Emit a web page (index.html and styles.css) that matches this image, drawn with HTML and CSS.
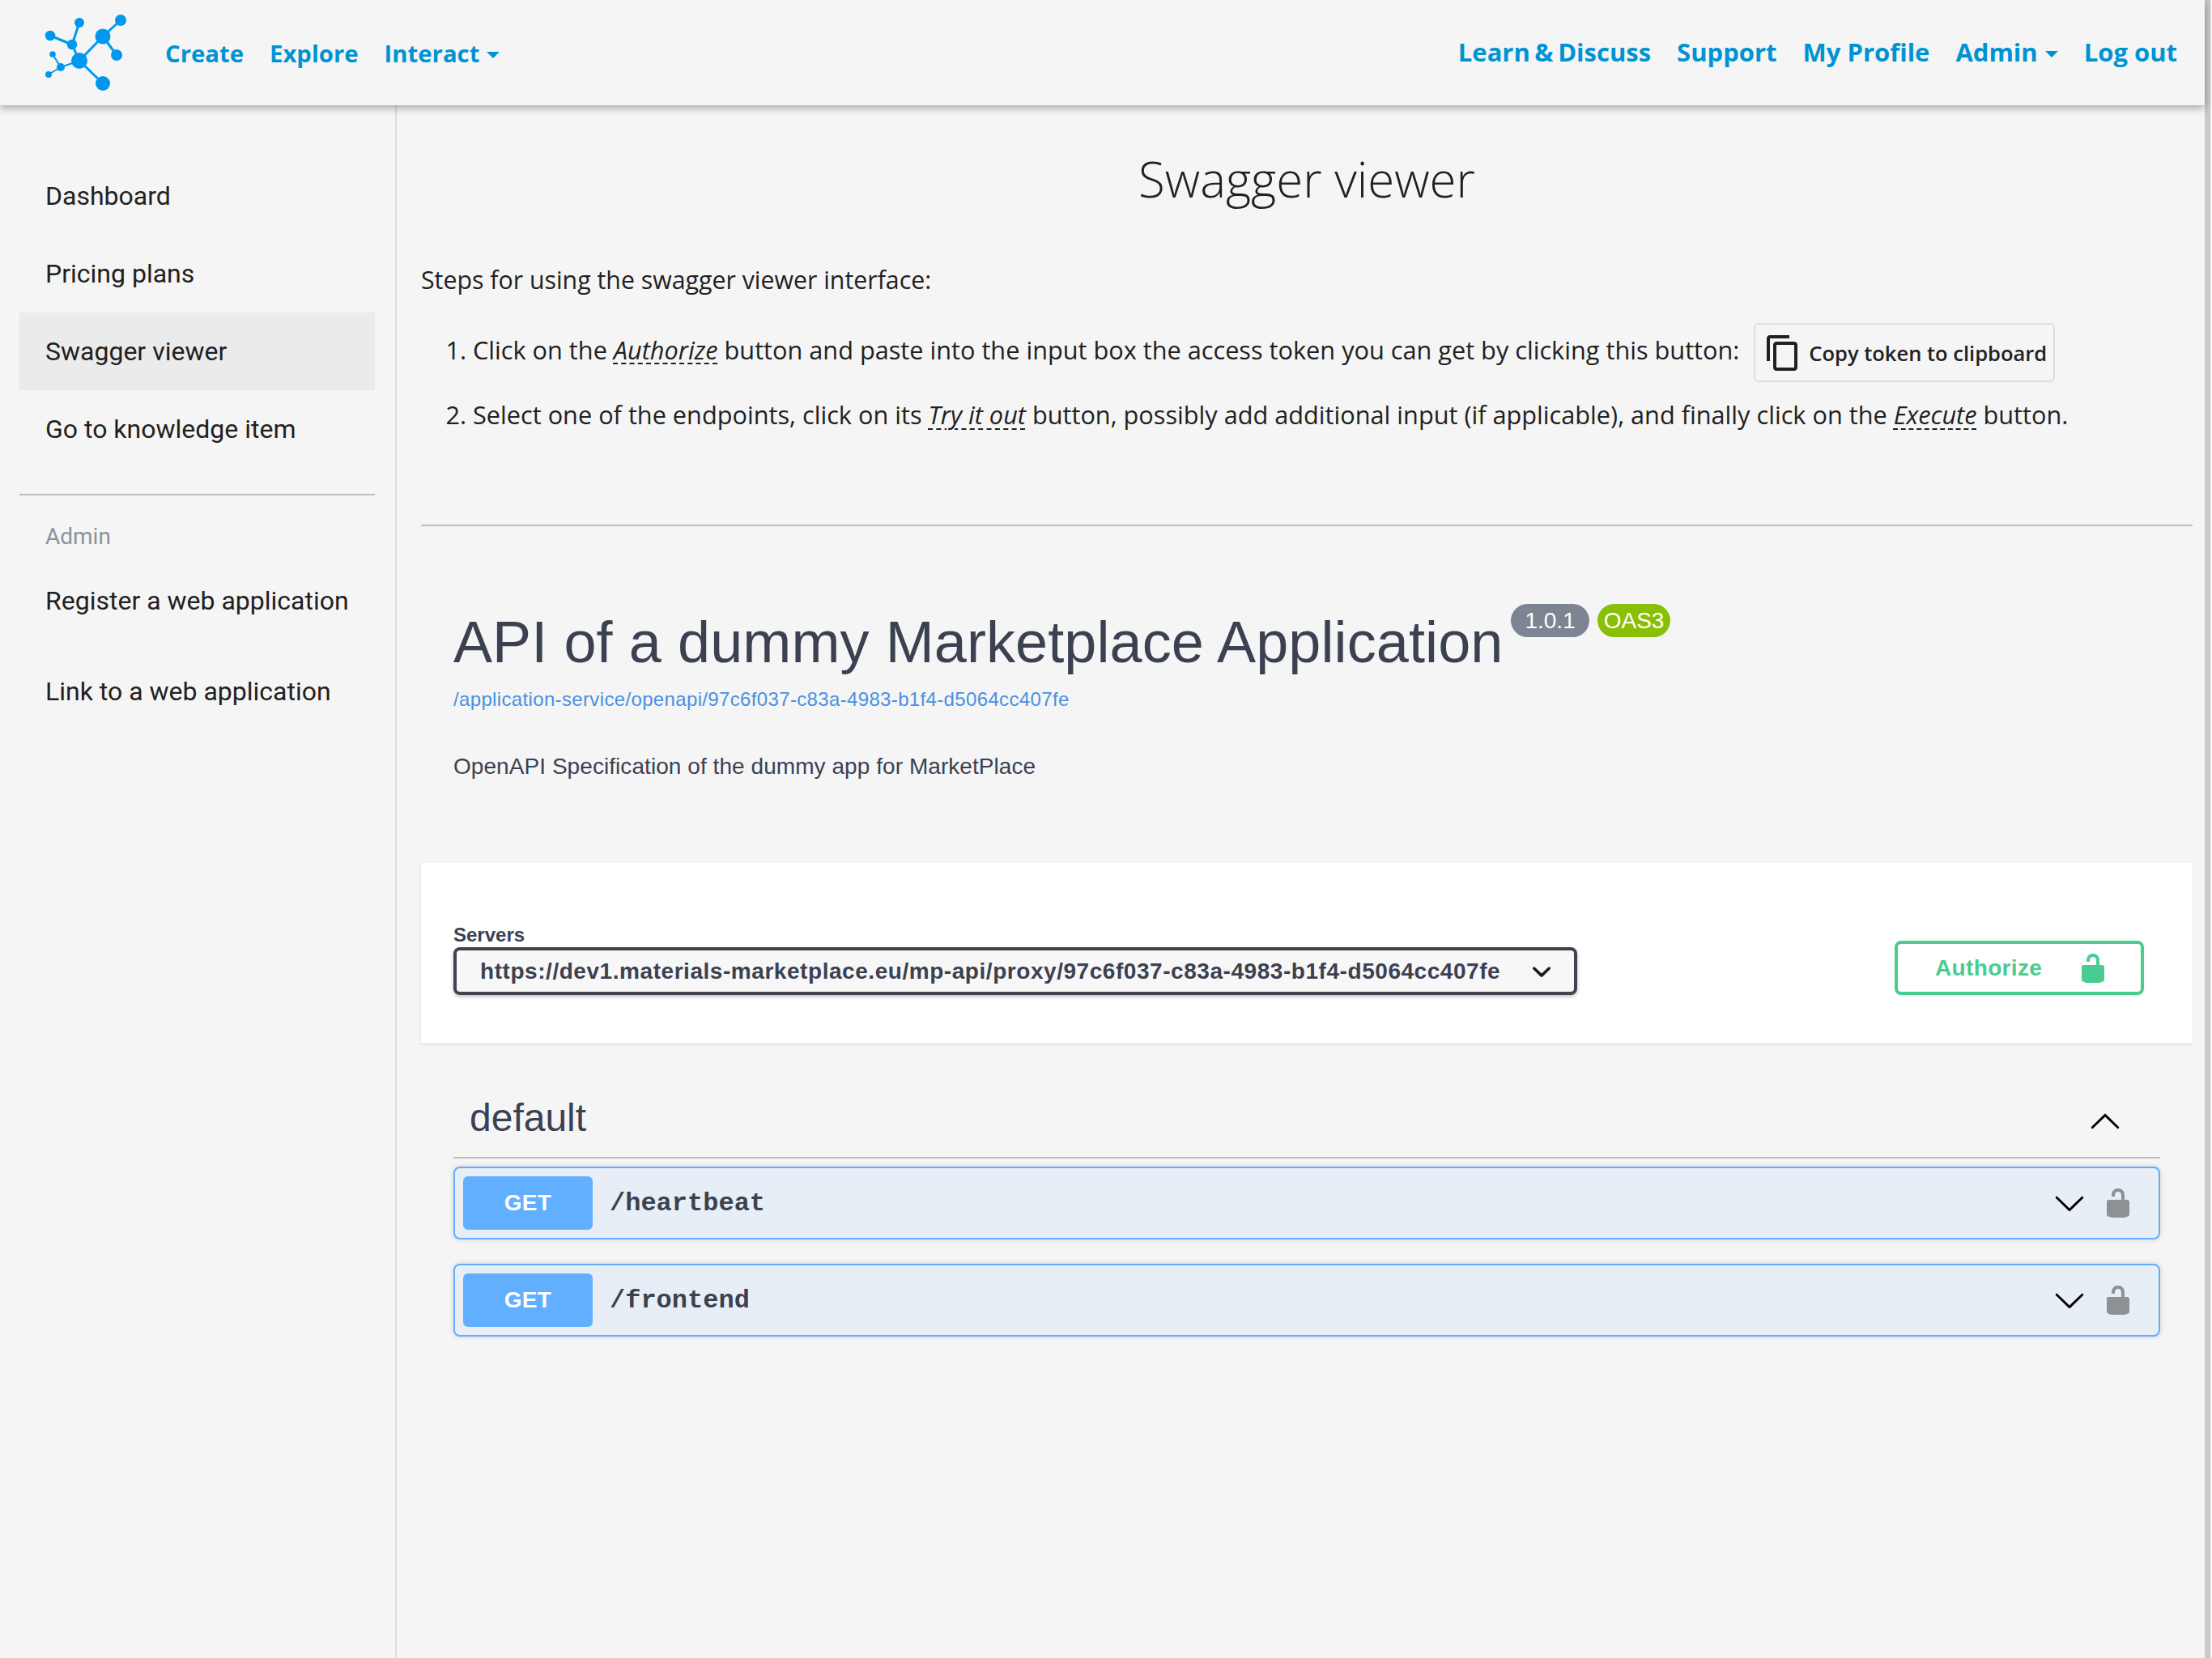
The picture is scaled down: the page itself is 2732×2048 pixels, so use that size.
FILE: index.html
```html
<!DOCTYPE html>
<html lang="en">
<head>
    <meta charset="UTF-8">
    <meta name="viewport" content="width=device-width, initial-scale=1.0">
    <title>Swagger viewer</title>
    <link rel="stylesheet" href="styles.css">
</head>
<body>
    <svg class="icon-defs" width="0" height="0" aria-hidden="true">
        <symbol id="lock-open" viewBox="0 0 20 20">
            <path d="M15.8 8H14V5.6C14 2.703 12.665 1 10 1 7.334 1 6 2.703 6 5.6V6h2v-.801C8 3.754 8.797 3 10 3c1.203 0 2 .754 2 2.199V8H4c-.553 0-1 .646-1 1.199V17c0 .549.428 1.139.951 1.307l1.197.387C5.672 18.861 6.55 19 7.1 19h5.8c.549 0 1.428-.139 1.951-.307l1.196-.387c.524-.167.953-.757.953-1.306V9.199C17 8.646 16.352 8 15.8 8z"/>
        </symbol>
        <symbol id="large-arrow" viewBox="0 0 20 20">
            <path d="M17.418 6.109c.272-.268.709-.268.979 0s.271.701 0 .969l-7.908 7.83c-.27.268-.707.268-.979 0l-7.908-7.83c-.27-.268-.27-.701 0-.969.271-.268.709-.268.979 0L10 13.25l7.418-7.141z"/>
        </symbol>
    </svg>

    <div class="page">
        <header class="topbar">
            <svg class="logo" viewBox="0 0 110 110" aria-label="Logo">
                <g stroke="#0098ef" stroke-width="3">
                    <line x1="99" y1="20" x2="77" y2="40"/>
                    <line x1="77" y1="40" x2="48" y2="70"/>
                    <line x1="77" y1="40" x2="94" y2="63"/>
                    <line x1="48" y1="70" x2="77" y2="98"/>
                    <line x1="48" y1="70" x2="39" y2="50"/>
                    <line x1="39" y1="50" x2="48" y2="23"/>
                    <line x1="39" y1="50" x2="12" y2="39"/>
                    <line x1="48" y1="70" x2="25" y2="78" stroke-width="2"/>
                    <line x1="25" y1="78" x2="15" y2="62" stroke-width="2"/>
                    <line x1="25" y1="78" x2="10" y2="87" stroke-width="2"/>
                </g>
                <g fill="#0098ef">
                    <circle cx="99" cy="20" r="7"/>
                    <circle cx="77" cy="40" r="9.5"/>
                    <circle cx="94" cy="63" r="7"/>
                    <circle cx="77" cy="98" r="9"/>
                    <circle cx="48" cy="70" r="10"/>
                    <circle cx="39" cy="50" r="6.3"/>
                    <circle cx="48" cy="23" r="6"/>
                    <circle cx="12" cy="39" r="6.3"/>
                    <circle cx="15" cy="62" r="3.8"/>
                    <circle cx="25" cy="78" r="5"/>
                    <circle cx="10" cy="87" r="4"/>
                </g>
            </svg>
            <nav class="nav nav-left">
                <a href="#">Create</a>
                <a href="#">Explore</a>
                <a href="#" class="caret">Interact</a>
            </nav>
            <nav class="nav nav-right">
                <a href="#" class="nav-learn">Learn &amp; Discuss</a>
                <a href="#">Support</a>
                <a href="#">My Profile</a>
                <a href="#" class="caret">Admin</a>
                <a href="#">Log out</a>
            </nav>
        </header>

        <div class="layout">
            <aside class="sidebar">
                <a href="#" class="side-link">Dashboard</a>
                <a href="#" class="side-link">Pricing plans</a>
                <a href="#" class="side-link active">Swagger viewer</a>
                <a href="#" class="side-link">Go to knowledge item</a>
                <hr class="side-divider">
                <div class="side-heading">Admin</div>
                <a href="#" class="side-link spaced">Register a web application</a>
                <a href="#" class="side-link spaced">Link to a web application</a>
            </aside>

            <main class="content">
                <h1 class="page-title">Swagger viewer</h1>
                <p class="intro">Steps for using the swagger viewer interface:</p>
                <ol class="steps">
                    <li>Click on the <abbr>Authorize</abbr> button and paste into the input box the access token you can get by clicking this button:
                        <button class="copy-btn">
                            <svg class="copy-icon" viewBox="0 0 24 24"><path d="M16 1H4c-1.1 0-2 .9-2 2v14h2V3h12V1zm3 4H8c-1.1 0-2 .9-2 2v14c0 1.1.9 2 2 2h11c1.1 0 2-.9 2-2V7c0-1.1-.9-2-2-2zm0 16H8V7h11v14z"/></svg>
                            Copy token to clipboard
                        </button>
                    </li>
                    <li>Select one of the endpoints, click on its <abbr>Try it out</abbr> button, possibly add additional input (if applicable), and finally click on the <abbr>Execute</abbr> button.</li>
                </ol>
                <hr class="content-divider">

                <section class="swagger">
                    <div class="api-info">
                        <div class="api-title-row">
                            <h2 class="api-title">API of a dummy Marketplace Application</h2>
                            <span class="stamp">1.0.1</span>
                            <span class="stamp stamp-oas">OAS3</span>
                        </div>
                        <a href="#" class="api-link">/application-service/openapi/97c6f037-c83a-4983-b1f4-d5064cc407fe</a>
                        <p class="api-desc">OpenAPI Specification of the dummy app for MarketPlace</p>
                    </div>

                    <div class="scheme-box">
                        <div class="servers">
                            <div class="servers-label">Servers</div>
                            <div class="servers-select">
                                <span>https://dev1.materials-marketplace.eu/mp-api/proxy/97c6f037-c83a-4983-b1f4-d5064cc407fe</span>
                                <svg class="select-arrow" viewBox="0 0 20 20"><path d="M13.418 7.859c.271-.268.709-.268.978 0 .27.268.272.701 0 .969l-3.908 3.83c-.27.268-.707.268-.979 0l-3.908-3.83c-.27-.268-.27-.701 0-.969.271-.268.709-.268.978 0L10 11l3.418-3.141z"/></svg>
                            </div>
                        </div>
                        <button class="authorize">
                            <span>Authorize</span>
                            <svg class="icon-40"><use href="#lock-open"/></svg>
                        </button>
                    </div>

                    <div class="tag-section">
                        <div class="tag-head">
                            <span class="tag-name">default</span>
                            <svg class="icon-40 arrow-up"><use href="#large-arrow"/></svg>
                        </div>
                        <div class="opblock">
                            <span class="method">GET</span>
                            <span class="path">/heartbeat</span>
                            <svg class="icon-40"><use href="#large-arrow"/></svg>
                            <svg class="icon-40 lock-grey"><use href="#lock-open"/></svg>
                        </div>
                        <div class="opblock">
                            <span class="method">GET</span>
                            <span class="path">/frontend</span>
                            <svg class="icon-40"><use href="#large-arrow"/></svg>
                            <svg class="icon-40 lock-grey"><use href="#lock-open"/></svg>
                        </div>
                    </div>
                </section>
            </main>
        </div>
    </div>
    <div class="scrollbar"></div>
</body>
</html>
```

FILE: styles.css
```css
/* Overall page */
html, body {
    height: 100%;
}

body {
    display: flex;
    margin: 0;
    height: 2048px;
    overflow: hidden;
    background: #f5f5f5;
    color: #212121;
    font-family: 'Open Sans', sans-serif;
}

.icon-defs {
    position: absolute;
}

.page {
    flex: 1;
    min-width: 0;
    display: flex;
    flex-direction: column;
}

.scrollbar {
    width: 7px;
    margin-right: 2px;
    background: #c9c9c9;
}

/* Top bar */
.topbar {
    display: flex;
    align-items: center;
    height: 130px;
    padding: 0 34px 0 50px;
    flex-shrink: 0;
    position: relative;
    box-shadow: 0 3px 10px rgba(0, 0, 0, 0.35);
}

.logo {
    width: 110px;
    height: 110px;
    margin-top: -15px;
    margin-bottom: -5px;
    margin-right: 44px;
}

.nav {
    display: flex;
    gap: 32px;
    font-weight: 700;
}

.nav a {
    color: #0093d3;
    text-decoration: none;
}

.nav-left {
    margin-top: 2px;
    font-size: 29.3px;
}

.nav-right {
    margin-left: auto;
    margin-top: -2px;
    font-size: 31px;
}

.nav-learn {
    word-spacing: -2.5px;
}

.caret::after {
    content: "";
    display: inline-block;
    margin-left: 9px;
    vertical-align: 5px;
    border-top: 8px solid #0093d3;
    border-left: 8px solid transparent;
    border-right: 8px solid transparent;
}

/* Sidebar */
.layout {
    flex: 1;
    display: flex;
    min-height: 0;
}

.sidebar {
    width: 439px;
    padding: 64px 25px 0 24px;
    border-right: 2px solid #dedede;
    flex-shrink: 0;
    font-family: Roboto, sans-serif;
}

.side-link {
    display: block;
    height: 96px;
    line-height: 96px;
    padding-left: 32px;
    font-size: 32px;
    color: #212121;
    text-decoration: none;
}

.side-link.active {
    background: #ebebeb;
}

.side-link.spaced {
    margin-bottom: 16px;
}

.side-divider {
    margin: 32px 0 0;
    border: 0;
    border-top: 2px solid #bdbdbd;
}

.side-heading {
    height: 82px;
    line-height: 102px;
    padding-left: 32px;
    font-size: 28px;
    color: #8b949c;
}

/* Main column */
.content {
    flex: 1;
    min-width: 0;
    padding: 0 15px 0 30px;
}

.page-title {
    margin: 0;
    padding-top: 46px;
    font-size: 60px;
    font-weight: 300;
    line-height: 90px;
    text-align: center;
}

.intro {
    margin: 58px 0 0;
    font-size: 30.3px;
    line-height: 44px;
}

.steps {
    margin: 31px 0 0;
    padding-left: 64px;
    font-size: 30.7px;
    line-height: 44px;
}

.steps li {
    margin-bottom: 18px;
}

abbr {
    font-style: italic;
    text-decoration: underline dashed 2px;
    text-underline-offset: 5px;
}

.copy-btn {
    display: inline-flex;
    align-items: center;
    gap: 8px;
    height: 73px;
    margin-left: 10px;
    padding: 0 8px 0 10px;
    vertical-align: middle;
    background: transparent;
    border: 2px solid #ddd;
    border-radius: 6px;
    color: #212121;
    font-family: 'Open Sans', sans-serif;
    font-size: 25.5px;
    font-weight: 600;
}

.copy-icon {
    width: 48px;
    height: 48px;
    fill: #212121;
}

.content-divider {
    margin: 114px 0 0;
    border: 0;
    border-top: 2px solid #bdbdbd;
}

/* Swagger part */
.swagger {
    color: #3b4151;
    font-family: 'Liberation Sans', Arial, sans-serif;
}

.api-info {
    padding: 98px 40px 0;
}

.api-title-row {
    display: flex;
    align-items: flex-start;
}

.api-title {
    margin: 0;
    font-size: 72px;
    font-weight: 400;
    line-height: 90px;
    letter-spacing: 0.1px;
}

.stamp {
    margin: -2px 0 0 10px;
    padding: 4px 17px;
    height: 33px;
    line-height: 33px;
    border-radius: 57px;
    background: #7d8492;
    color: #fff;
    font-size: 28px;
}

.stamp-oas {
    padding: 4px 8px;
    background: #89bf04;
}

.api-link {
    display: block;
    margin-top: 11px;
    font-size: 24px;
    line-height: 30px;
    letter-spacing: 0.35px;
    color: #4990e2;
    text-decoration: none;
}

.api-desc {
    margin: 52px 0 0;
    font-size: 28px;
    line-height: 32px;
    letter-spacing: 0.06px;
}

.scheme-box {
    display: flex;
    align-items: flex-end;
    justify-content: space-between;
    box-sizing: border-box;
    height: 223px;
    margin-top: 103px;
    padding: 0 60px 60px 40px;
    background: #fff;
    box-shadow: 0 1px 2px rgba(0, 0, 0, 0.15);
}

.servers-label {
    font-size: 24px;
    font-weight: 700;
    line-height: 31px;
}

.servers-select {
    display: flex;
    align-items: center;
    justify-content: space-between;
    box-sizing: border-box;
    width: 1388px;
    height: 59px;
    padding: 0 16px 0 29px;
    background: #f7f7f7;
    border: 4px solid #41444e;
    border-radius: 8px;
    box-shadow: 0 2px 4px rgba(0, 0, 0, 0.25);
    font-size: 28px;
    font-weight: 700;
    letter-spacing: 0.55px;
}

.select-arrow {
    width: 48px;
    height: 48px;
    fill: #1a1a1a;
}

.authorize {
    display: flex;
    align-items: center;
    box-sizing: border-box;
    width: 308px;
    height: 67px;
    padding: 0 0 0 46px;
    background: transparent;
    border: 4px solid #49cc90;
    border-radius: 8px;
    box-shadow: 0 1px 2px rgba(0, 0, 0, 0.1);
    color: #49cc90;
    font-family: inherit;
    font-size: 28px;
    font-weight: 700;
    letter-spacing: 0.35px;
}

.authorize span {
    margin-right: 43px;
}

.icon-40 {
    width: 40px;
    height: 40px;
    flex-shrink: 0;
}

.authorize .icon-40 {
    fill: #49cc90;
}

.tag-section {
    padding: 0 40px;
}

.tag-head {
    display: flex;
    align-items: flex-end;
    justify-content: space-between;
    box-sizing: content-box;
    height: 119px;
    padding: 0 48px 21px 20px;
    border-bottom: 2px solid #bcbdc1;
}

.tag-name {
    font-size: 48px;
}

.arrow-up {
    transform: rotate(180deg);
    margin-bottom: 2px;
}

.opblock {
    display: flex;
    align-items: center;
    box-sizing: border-box;
    height: 90px;
    margin-top: 10px;
    margin-bottom: 30px;
    padding: 0 30px 0 10px;
    background: #e8eef5;
    border: 2px solid #61affe;
    border-radius: 8px;
    box-shadow: 0 0 6px rgba(0, 0, 0, 0.15);
}

.opblock + .opblock {
    margin-top: 0;
}

.method {
    width: 160px;
    height: 66px;
    line-height: 66px;
    background: #61affe;
    border-radius: 6px;
    color: #fff;
    font-size: 28px;
    font-weight: 700;
    letter-spacing: 0.3px;
    text-align: center;
}

.path {
    flex: 1;
    padding-left: 21px;
    font-family: 'Liberation Mono', monospace;
    font-size: 32px;
    font-weight: 700;
}

.lock-grey {
    margin-left: 20px;
    fill: #8d9195;
}
```
